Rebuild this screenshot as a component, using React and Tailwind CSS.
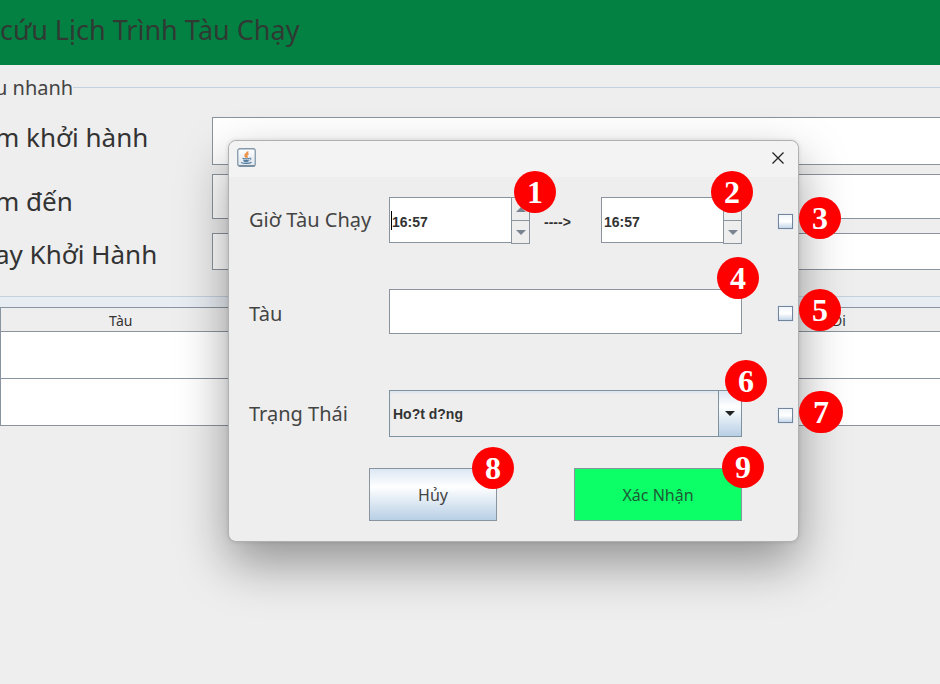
import React from "react";

const FIELD = "border border-[#8a949e]";

function Badge({ n, className }) {
  return (
    <span
      className={`pointer-events-none absolute z-10 flex h-[42px] items-center justify-center rounded-full bg-[#ff0000] font-['Liberation_Serif',serif] text-[32px] leading-none font-bold text-white ${className}`}
    >
      {n}
    </span>
  );
}

function Triangle({ up, className }) {
  return (
    <svg viewBox="0 0 10 5" className={`h-[5px] w-[10px] ${className}`} aria-hidden="true">
      <path d={up ? "M0 5 L5 0 L10 5Z" : "M0 0 L10 0 L5 5Z"} fill="currentColor" />
    </svg>
  );
}

function Spinner({ label, caret, children }) {
  return (
    <div className="relative flex h-[46px] w-[141px]">
      <input
        type="text"
        aria-label={label}
        defaultValue="16:57"
        className={`w-[123px] bg-white pt-1 pl-0.5 text-sm font-bold text-[#333] outline-none ${FIELD}`}
      />
      {caret && <span className="absolute top-[14px] left-[2px] h-[19px] w-px bg-black" />}
      <div className="-ml-px flex h-[47px] w-[19px] flex-col">
        <button type="button" aria-label={`${label} +`} className={`flex h-6 items-center justify-center bg-[#eee] ${FIELD}`}>
          <Triangle up className="text-[#7a8491]" />
        </button>
        <button type="button" aria-label={`${label} -`} className={`-mt-px flex h-6 items-center justify-center bg-[#eee] ${FIELD}`}>
          <Triangle className="text-[#7a8491]" />
        </button>
      </div>
      {children}
    </div>
  );
}

function Check({ n, label, wide }) {
  return (
    <div className="relative ml-9 flex items-center pt-[3px]">
      <input
        type="checkbox"
        aria-label={label}
        className="size-[15px] appearance-none border border-[#72859b] bg-linear-to-b from-[#f0f5fb] via-white to-[#c4d6ea] shadow-[0_0_0_1px_#e2e8ee]"
      />
      <Badge n={n} className={`bottom-[-10px] left-[21px] ${wide ? "w-11" : "w-[42px]"}`} />
    </div>
  );
}

function JavaIcon() {
  return (
    <svg viewBox="0 0 19 19" className="size-[19px]" aria-hidden="true">
      <defs>
        <linearGradient id="frame" x1="0" y1="0" x2="0" y2="1">
          <stop offset="0" stopColor="#ffffff" />
          <stop offset="1" stopColor="#dde5ed" />
        </linearGradient>
      </defs>
      <rect x="0.75" y="0.75" width="17.5" height="17.5" rx="2" fill="url(#frame)" stroke="#8499ab" strokeWidth="1.3" />
      <path d="M1.5 17.8h16" stroke="#64798d" strokeWidth="1" />
      <path d="M10.7 3.4c.3 1.8-3.1 2.7-2.6 4.4.2.8 1 1.2 1 1.9M11.6 5.6c-1.4.7-2.3 1.4-1.8 2.3.4.6.5 1.1 0 1.7" fill="none" stroke="#ee9448" strokeWidth="1.7" />
      <path d="M5.5 10.2c1.8.7 5.3.7 7.3 0M6.2 12c1.6.6 4.2.6 5.8 0M6.8 13.5c1.3.5 3.3.5 4.6 0M4.2 14.5c2.5 1.4 8 1.3 10.3-.2" fill="none" stroke="#527b9e" strokeWidth="1.2" />
      <path d="M12.8 10.2c1.7-.5 1.8 1.2-.1 2" fill="none" stroke="#527b9e" strokeWidth="1" />
    </svg>
  );
}

function SearchRow({ id, text, rowClass, labelClass, inputClass }) {
  return (
    <div className={`flex ${rowClass}`}>
      <div className="w-[212px] shrink-0">
        <label htmlFor={id} className={`-ml-[5px] block text-[26px] whitespace-nowrap text-[#333] ${labelClass}`}>
          {text}
        </label>
      </div>
      <input id={id} type="text" className={`min-w-0 flex-1 border-y border-l border-[#8a949e] bg-white outline-none ${inputClass}`} />
    </div>
  );
}

function Dialog() {
  return (
    <div
      role="dialog"
      aria-label="Giờ Tàu Chạy"
      className="absolute top-[140px] left-[228px] w-[571px] rounded-lg border border-[#b0b0b0] bg-[#eee] pb-5 shadow-[0_22px_50px_rgba(0,0,0,0.38),0_0_4px_rgba(0,0,0,0.12)]"
    >
      <div className="flex h-9 items-center justify-between rounded-t-lg bg-[#f3f3f3] pr-3 pb-[3px] pl-2">
        <JavaIcon />
        <button type="button" aria-label="Close" className="flex size-4 items-center justify-center text-[#222]">
          <svg viewBox="0 0 12 12" className="size-3" aria-hidden="true">
            <path d="M.5.5l11 11M11.5.5l-11 11" stroke="currentColor" strokeWidth="1.3" />
          </svg>
        </button>
      </div>

      <form className="pt-5 pl-5" onSubmit={(e) => e.preventDefault()}>
        <div className="flex h-[46px] items-center">
          <span className="w-[140px] text-xl text-[#444]">Giờ Tàu Chạy</span>
          <Spinner label="Giờ bắt đầu" caret>
            <Badge n={1} className="-top-[26px] -right-[26px] w-[42px]" />
          </Spinner>
          <span className="w-[71px] pt-1 pl-[14px] font-['Liberation_Sans',Arial,sans-serif] text-sm font-bold text-[#333]">----&gt;</span>
          <Spinner label="Giờ kết thúc">
            <Badge n={2} className="-top-[26px] -right-[11px] w-[42px]" />
          </Spinner>
          <Check n={3} label="Lọc theo giờ" />
        </div>

        <div className="mt-[46px] flex h-[45px] items-center">
          <label htmlFor="train" className="w-[140px] pt-1 text-xl text-[#444]">Tàu</label>
          <div className="relative h-full w-[353px]">
            <input id="train" type="text" className={`h-full w-full bg-white outline-none ${FIELD}`} />
            <Badge n={4} className="-top-8 -right-[17px] w-[42px]" />
          </div>
          <Check n={5} label="Lọc theo tàu" />
        </div>

        <div className="mt-14 flex h-[47px] items-center">
          <label htmlFor="status" className="w-[140px] text-xl text-[#444]">Trạng Thái</label>
          <div className="relative h-full w-[353px]">
            <select
              id="status"
              className="h-full w-full appearance-none border border-[#7f929f] bg-[#eee] pl-[3px] text-sm font-bold text-[#333] shadow-[inset_0_2px_2px_#dde6ee] outline-none"
            >
              <option>Ho?t d?ng</option>
            </select>
            <span className="pointer-events-none absolute inset-y-0 right-0 flex w-6 items-center justify-center border border-[#7f929f] bg-linear-to-b from-[#dce7f3] via-white via-35% to-[#b8cfe5]">
              <Triangle className="text-[#222]" />
            </span>
            <Badge n={6} className="-top-[30px] -right-[25px] w-[42px]" />
          </div>
          <Check n={7} label="Lọc theo trạng thái" wide />
        </div>

        <div className="mt-[31px] flex justify-between pr-14 pl-[120px]">
          <button
            type="button"
            className={`relative h-[53px] w-32 bg-linear-to-b from-[#dce7f3] via-white via-35% to-[#b8cfe5] text-base text-[#444] ${FIELD}`}
          >
            Hủy
            <Badge n={8} className="-top-[22px] -right-[18px] w-[42px]" />
          </button>
          <button
            type="submit"
            className={`relative h-[53px] w-[168px] bg-[#0cff66] text-base text-[#1d5a35] ${FIELD}`}
          >
            Xác Nhận
            <Badge n={9} className="-top-[23px] -right-[23px] w-[42px]" />
          </button>
        </div>
      </form>
    </div>
  );
}

export default function App() {
  return (
    <div className="relative min-h-screen overflow-hidden bg-[#eee] font-['Noto_Sans',sans-serif] text-[#333] [&_input]:font-['Liberation_Sans',Arial,sans-serif] [&_select]:font-['Liberation_Sans',Arial,sans-serif]">
      <header className="flex h-[65px] items-center bg-[#038143] pb-1">
        <h1 className="text-[27px] whitespace-nowrap text-[#2f3a33]">cứu Lịch Trình Tàu Chạy</h1>
      </header>

      <fieldset className="mt-2 border-y border-[#c3d0de] pb-[26px]">
        <legend className="-ml-[5px] pt-0.5 text-xl leading-[26px] text-[#444]">u nhanh</legend>
        <SearchRow id="from" text="m khởi hành" rowClass="mt-4" labelClass="pt-0.5 leading-9" inputClass="h-12" />
        <SearchRow id="to" text="m đến" rowClass="mt-[9px] items-end" labelClass="leading-9" inputClass="h-[45px]" />
        <SearchRow id="date" text="ay Khởi Hành" rowClass="mt-[14px] items-center" labelClass="pt-1 leading-8" inputClass="h-[37px]" />
      </fieldset>

      <div className="h-2.5 bg-[#e8edf3]" />
      <table className="w-full table-fixed border-collapse border-y border-l border-[#8a949e] text-sm">
        <thead>
          <tr className="h-6 border-b border-[#8a949e]">
            <th className="w-60 pt-0.5 font-normal">Tàu</th>
            <th />
            <th />
            <th className="w-[202px] pt-0.5 font-normal">Đi</th>
          </tr>
        </thead>
        <tbody className="bg-white">
          <tr className="h-[47px] border-b border-[#8a949e]"><td /><td /><td /><td /></tr>
          <tr className="h-[47px]"><td /><td /><td /><td /></tr>
        </tbody>
      </table>

      <Dialog />
    </div>
  );
}
